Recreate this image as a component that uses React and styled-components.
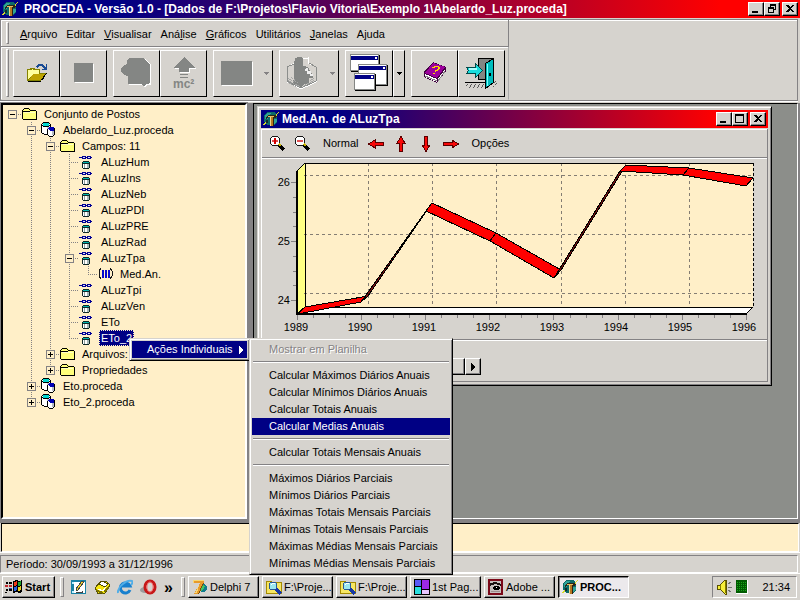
import React from "react";
import styled, { createGlobalStyle, css } from "styled-components";

const face = "#d6d3ce";
const shade = "#848284";
const cream = "#ffefc8";
const navy = "#000084";

const GlobalStyle = createGlobalStyle`
  * { box-sizing: border-box; }
  html, body { margin: 0; }
  body {
    background: ${face};
    color: #000;
    font: 11px/13px "Liberation Sans", Arial, sans-serif;
    overflow: hidden;
  }
  button { font: inherit; color: inherit; padding: 0; margin: 0; }
  ul { list-style: none; margin: 0; padding: 0; }
  svg { display: block; flex: none; }
`;

const raised = css`
  border: 1px solid;
  border-color: #fff #000 #000 #fff;
  box-shadow: inset -1px -1px 0 ${shade};
`;
const sunken = css`
  border: 1px solid;
  border-color: ${shade} #fff #fff ${shade};
`;

const Screen = styled.div`
  position: relative;
  display: flex;
  flex-direction: column;
  min-height: 100vh;
  background: ${face};
`;

const TitleBar = styled.header`
  display: flex;
  align-items: center;
  height: 18px;
  padding: 0 2px;
  gap: 3px;
  color: #fff;
  background: linear-gradient(90deg, ${navy} 0%, ${navy} 15%, #ff0000 90%);
`;
const Title = styled.h1`
  flex: 1;
  min-width: 0;
  margin: 0;
  padding-left: ${(p) => p.$inset || 0}px;
  font-size: 12px;
  line-height: 16px;
  white-space: nowrap;
  overflow: hidden;
`;
const Captions = styled.div`
  display: flex;
`;
const CaptionButton = styled.button`
  ${raised}
  display: grid;
  place-items: center;
  width: 16px;
  height: 14px;
  background: ${face};
  margin-left: ${(p) => (p.$apart ? 2 : 0)}px;
`;

const CoolBar = styled.div`
  margin: 1px 2px 2px 0;
  border: 1px solid ${shade};
  box-shadow: inset 1px 1px 0 #fff, 0 1px 0 #fff;
`;
const Band = styled.div`
  display: flex;
  align-items: center;
  width: max-content;
  min-width: 508px;
  height: ${(p) => p.$height}px;
  padding-left: 5px;
  border-right: 1px solid ${(p) => (p.$last ? "#aaa" : shade)};
  border-bottom: 1px solid ${(p) => (p.$last ? face : shade)};
  box-shadow: inset 1px 1px 0 #fff;
`;
const Grip = styled.i`
  align-self: stretch;
  width: 3px;
  margin: 2px ${(p) => p.$after}px 2px 0;
  border: 1px solid;
  border-color: #fff ${shade} ${shade} #fff;
`;
const MenuBar = styled.nav`
  display: flex;
  gap: 9px;
  padding: 2px 0 0 11px;
`;
const MenuButton = styled.button`
  border: 0;
  background: none;
  line-height: 14px;
`;
const ToolStrip = styled.div`
  display: flex;
  gap: 6px;
  padding-right: 2px;
`;
const ToolGroup = styled.div`
  display: flex;
`;
const ToolButton = styled.button`
  ${raised}
  box-shadow: none;
  display: grid;
  place-items: center;
  width: ${(p) => p.$width || 47}px;
  height: 47px;
  background: ${face};
`;
const SplitFace = styled.span`
  display: flex;
  align-items: center;
  justify-content: space-between;
  width: 100%;
  padding: 0 3px 0 6px;
`;

const Work = styled.main`
  display: flex;
  flex: 1;
  background: ${shade};
`;
const TreePanel = styled.aside`
  width: 246px;
  margin: 0 6px 4px 1px;
  padding: 1px 0;
  background: ${cream};
  border: 2px solid;
  border-color: #000 #fff #fff #000;
  outline: 1px solid ${shade};
`;
const TreeRow = styled.li`
  display: flex;
  align-items: center;
  height: 16px;
`;
const NodeIcon = styled.span`
  display: grid;
  place-items: center start;
  width: 20px;
  height: 16px;
`;
const NodeLabel = styled.span`
  padding: 1px 2px;
  line-height: 14px;
  white-space: nowrap;
  ${(p) => p.$selected && css`
    color: #fff;
    background: ${navy};
    outline: 1px dotted ${cream};
    outline-offset: -1px;
  `}
`;
const Toggle = styled.button`
  display: block;
  border: 0;
  background: none;
`;

const Desktop = styled.section`
  position: relative;
  flex: 1;
  margin: 0 2px 4px 0;
  background: #8c8e8a;
  border: 1px solid;
  border-color: #000 #fff #fff #000;
`;
const ChildWindow = styled.article`
  position: absolute;
  left: 3px;
  top: 2px;
  width: 515px;
  background: ${face};
  ${raised}
  border-color: ${face} #000 #000 ${face};
  box-shadow: inset 1px 1px 0 #fff, inset -1px -1px 0 ${shade};
  padding: 3px;
`;
const ChildBody = styled.div`
  margin-top: 1px;
  border-right: 1px solid ${shade};
  border-left: 1px solid #fff;
`;
const ChartTools = styled.div`
  display: flex;
  align-items: center;
  height: 29px;
  padding-left: 3px;
  border-top: 1px solid #fff;
  border-bottom: 1px solid ${shade};
`;
const FlatButton = styled.button`
  display: grid;
  place-items: center;
  min-width: 25px;
  height: 22px;
  border: 0;
  background: none;
`;
const WideFlat = styled(FlatButton)`
  padding: 0 5px 0 8px;
  min-width: 44px;
`;
const ChartHolder = styled.div`
  box-shadow: inset 0 1px 0 #fff;
  svg { width: 100%; height: auto; }
`;
const ScrollPanel = styled.div`
  height: 43px;
  padding: 18px 0 0 31px;
  border-top: 1px solid ${shade};
  border-bottom: 1px solid ${shade};
  box-shadow: inset 0 1px 0 #fff;
`;
const ScrollBar = styled.div`
  display: flex;
  width: 188px;
`;
const ScrollButton = styled.button`
  ${raised}
  display: grid;
  place-items: center;
  width: 16px;
  height: 17px;
  background: ${face};
`;
const Thumb = styled.div`
  ${raised}
  flex: 1;
`;

const Memo = styled.textarea`
  display: block;
  width: calc(100% - 2px);
  height: 29px;
  margin: 0 1px;
  resize: none;
  background: ${cream};
  border: 1px solid;
  border-color: #000 #fff #fff #000;
  border-radius: 0;
  outline: 0;
`;
const MemoFrame = styled.div`
  border-bottom: 1px solid #fff;
`;
const StatusBar = styled.footer`
  ${sunken}
  height: 18px;
  margin: 2px 2px 0 0;
  padding: 1px 5px;
  line-height: 14px;
`;

const TaskBar = styled.footer`
  display: flex;
  align-items: center;
  height: 27px;
  padding: 0 3px 0 2px;
  border-top: 1px solid #fff;
`;
const StartButton = styled.button`
  ${raised}
  display: flex;
  align-items: center;
  gap: 2px;
  width: 53px;
  height: 22px;
  padding-left: 2px;
  font-weight: bold;
  background: ${face};
`;
const Divider = styled.i`
  width: 4px;
  height: 20px;
  margin: 0 ${(p) => p.$after}px 0 5px;
  border: 1px solid;
  border-color: #fff ${shade} ${shade} #fff;
`;
const QuickLaunch = styled.div`
  display: flex;
  align-items: center;
  gap: 7px;
  width: 105px;
`;
const QuickButton = styled.button`
  border: 0;
  background: none;
  font-weight: bold;
  font-size: 16px;
`;
const Tasks = styled.div`
  display: flex;
  flex: 1;
  gap: 3px;
`;
const TaskButton = styled.button`
  ${raised}
  display: flex;
  align-items: center;
  gap: 2px;
  width: 71px;
  height: 22px;
  padding-left: 3px;
  white-space: nowrap;
  overflow: hidden;
  background: ${face};
  ${(p) => p.$active && css`
    font-weight: bold;
    background: #ece9ec;
    border-color: #000 #fff #fff #000;
    box-shadow: inset 1px 1px 0 ${shade};
  `}
`;
const Tray = styled.div`
  ${sunken}
  display: flex;
  align-items: center;
  gap: 3px;
  width: 85px;
  height: 22px;
  padding: 0 6px 0 3px;
`;
const Clock = styled.time`
  margin-left: auto;
`;

const Popup = styled.ul`
  ${raised}
  position: absolute;
  border-color: ${face} #000 #000 ${face};
  box-shadow: inset 1px 1px 0 #fff, inset -1px -1px 0 ${shade};
  padding: 2px;
  background: ${face};
`;
const ParentPopup = styled(Popup)`
  left: 129px;
  top: 338px;
  width: 121px;
`;
const SubPopup = styled(Popup)`
  left: 249px;
  top: 338px;
  width: 204px;
`;
const PopupItem = styled.button`
  display: flex;
  align-items: center;
  justify-content: space-between;
  width: 100%;
  height: 17px;
  padding: 0 3px 0 ${(p) => p.$inset || 17}px;
  border: 0;
  background: ${(p) => (p.$hot ? navy : "transparent")};
  color: ${(p) => (p.$hot ? "#fff" : "#000")};
  white-space: nowrap;
  &:disabled {
    color: ${shade};
    text-shadow: 1px 1px 0 #fff;
  }
`;
const PopupRule = styled.li`
  height: 2px;
  margin: 3px 1px 4px;
  border-top: 1px solid ${shade};
  border-bottom: 1px solid #fff;
`;

/* ---------- icons ---------- */

const Icon = ({ w = 16, h = 16, children }) => (
  <svg width={w} height={h} viewBox={`0 0 ${w} ${h}`} shapeRendering="crispEdges" aria-hidden="true">
    {children}
  </svg>
);

const AppIcon = () => (
  <Icon>
    <path d="M4 1h7l3 3v7l-3 3H4l-3-3V4z" fill="#0b6a68" />
    <path d="M4 2h4L5 5v3H2V4zM11 8h3v3l-3 2z" fill="#2fa398" />
    <path d="M0 14l3-4 2-1v1l-3 4zM12 5l3-4h1l-3 5z" fill="#d8dc28" />
    <path d="M2 7l4-3h6l2 1-1 2h-3V6H6L3 8z" fill="#2c2418" />
    <path d="M5 5h6v1H5z" fill="#e8c060" />
    <path d="M7 6h3v9H7z" fill="#b87820" />
    <path d="M7 6h1v9H7z" fill="#f0d890" />
    <path d="M10 7h1v8h-1z" fill="#302010" />
    <path d="M3 9h2v3H3z" fill="#102c2c" />
  </Icon>
);

const glyphs = {
  min: <path d="M1 7h6v2H1z" />,
  restore: <path fillRule="evenodd" d="M3 0h6v6H7V5h1V2H4v1H3zM1 3h6v6H1zm1 2v3h4V5z" />,
  max: <path fillRule="evenodd" d="M0 0h9v9H0zm1 2v6h7V2z" />,
  close: <path d="M1 1h2l2 2 2-2h2L6 4.500 9 8H7L5 6 3 8H1l3-3.500z" />,
};
const CaptionSet = ({ middle }) => (
  <Captions>
    {["min", middle, "close"].map((name) => (
      <CaptionButton key={name} $apart={name === "close"} aria-label={name}>
        <Icon w={10} h={10}>{glyphs[name]}</Icon>
      </CaptionButton>
    ))}
  </Captions>
);

const DownArrow = ({ fill = "#848284" }) => (
  <Icon w={5} h={3}><path d="M0 0h5L3 3H2z" fill={fill} /></Icon>
);
const RightArrow = ({ fill = "#000" }) => (
  <Icon w={5} h={8}><path d="M0 0l4 4-4 4z" fill={fill} /></Icon>
);

const OpenIcon = () => (
  <Icon w={22} h={20}>
    <path d="M1 6h2l1-1h4l1 1h5v4h6l-5 8H1z" fill="#848200" />
    <path d="M2 7h3l1-1 2 1h5v4H7l-5 6z" fill="#ffff9c" />
    <path d="M7 11h12l-4 6H3z" fill="#bda200" />
    <path d="M2 18h13v1H2zM15 17l5-7h1l-5 8z" fill="#000" />
    <path d="M10 4l2-3h4l3 3h1V1h1v6h-5V6h2l-3-3h-2l-2 2z" fill="#184a94" />
  </Icon>
);
const SquareIcon = () => (
  <Icon w={22} h={22}>
    <path d="M2 2h19v19H2z" fill="#fff" />
    <rect x="1" y="1" width="19" height="19" rx="1" fill="#848684" />
  </Icon>
);
const BlobIcon = () => (
  <Icon w={32} h={32}>
    <path d="M7 2h17l6 6v20h-4l-2 3-3-3H8v-8l-4-2v-9l3-2z" fill="#fff" />
    <path d="M8 1h14l7 7v17l-1 2h-3l-2 3-3-3H7v-8l-4-1-3-3v-4l3-3 3-1V3z" fill="#848684" />
  </Icon>
);
const McText = styled.text`
  font: bold 12px "Liberation Sans", Arial, sans-serif;
`;
const EnergyIcon = () => (
  <Icon w={26} h={34}>
    <path d="M14 2l11 11h-6v4H9v-4H3z" fill="#fff" />
    <path d="M13 1l11 11h-6v4H8v-4H2z" fill="#848684" />
    <path d="M9 18h8v1H9zM9 21h8v1H9z" fill="#848684" />
    <McText x="2" y="32" fill="#848684">mc²</McText>
  </Icon>
);
const PanelIcon = () => (
  <Icon w={33} h={26}>
    <path d="M2 2h31v24H2z" fill="#fff" />
    <rect x="1" y="1" width="31" height="24" rx="1" fill="#848684" />
  </Icon>
);
const CubeIcon = () => (
  <Icon w={32} h={34}>
    <path d="M1 11l8-4M9 7V2M17 3l5-1v5l8 4v15l-15 7-14-7V11" fill="none" stroke="#fff" />
    <path d="M1 11l7-3M1 11v14l14 7 15-7V11l-7-4" fill="none" stroke="#8c8e8c" />
    <path d="M9 2l3-1h4l1 2v7l5 1 3 6 2 2v3h-4v6h-5l-3 4-4-3H6l2-7V9z" fill="#848684" />
    <path d="M20 12h2v3h3v3h2v2h-3v-2h-3v-3h-2z" fill="#eee" />
    <path d="M2 22l12 9M2 24l9 6M2 26l8 5M5 21l9 8M28 22l-10 8M28 24l-8 6" stroke="#a5a6a5" strokeDasharray="1 1" />
  </Icon>
);
const MiniWindow = ({ x, y, w, h }) => (
  <g>
    <rect x={x + 1} y={y + 1} width={w} height={h} fill="#000" />
    <rect x={x} y={y} width={w} height={h} fill="#848684" />
    <rect x={x + 1} y={y + 1} width={w - 2} height={h - 2} fill="#fff" />
    <rect x={x + 1} y={y + 2} width={w - 2} height="4" fill={navy} />
    <rect x={x + w - 4} y={y + 3} width="2" height="2" fill="#fff" />
  </g>
);
const WindowsIcon = () => (
  <Icon w={41} h={38}>
    <MiniWindow x={1} y={0} w={29} h={17} />
    <MiniWindow x={9} y={10} w={29} h={21} />
    <MiniWindow x={5} y={19} w={21} h={17} />
  </Icon>
);
const BookIcon = () => (
  <Icon w={24} h={24}>
    <path d="M10 1l13 5v4L14 22 1 16v-5z" fill="#420042" />
    <path d="M10 2l12 4-8 11-12-5z" fill="#9c009c" />
    <path d="M2 13l12 5v3L2 16zM15 18l7-10v2l-7 10z" fill="#fff" />
    <path d="M2 15l12 5M15 20l7-10" stroke="#848284" />
    <path d="M9 6.500h2l1-1h3l1 1v1l-2 2h-2v1" fill="none" stroke="#ffd700" />
    <path d="M10 12h2v1h-2z" fill="#ffd700" />
  </Icon>
);
const ExitIcon = () => (
  <Icon w={33} h={34}>
    <path d="M13.500 2.500h15v21h-15z" fill="#848684" stroke="#000" />
    <path d="M20.500 7.500l8-5v24l-8 6z" fill="#00bdbd" stroke="#000" />
    <path d="M22.500 8v22" stroke="#7bffff" />
    <path d="M24 17h2v3h-2z" fill="#000" />
    <path d="M1.500 11.500h9v-4l7 7-7 7v-4h-9l2-3z" fill="#18dede" stroke="#004a4a" />
    <path d="M4 12h8v2H4z" fill="#a5ffff" />
    <path d="M0 26h20v1H0z" />
    <path d="M3 28l-3 3M7 28l-4 5M11 28l-4 5M15 28l-4 5M19 28l-4 5M32 27l-4 4M31 25l-2 2" stroke="#5a5a5a" strokeDasharray="1 1" />
  </Icon>
);

const FolderIcon = () => (
  <Icon>
    <path d="M1 4h1l1-2h5l1 2h5v9H1z" fill="#ffff7b" />
    <path d="M1 3h1v1H1zM2 2h5v1H2zM7 3h1v1H7zM0 4h1v9H0zM8 4h6v1H8zM14 5h1v8h-1zM1 13h14v1H1zM1 5h7v1H1z" fill="#000" />
    <path d="M2 6h11v1H2z" fill="#ffffc6" />
  </Icon>
);
const StationIcon = () => (
  <Icon>
    <path d="M1 2h8v9l-2 1H3l-2-1z" fill="#fff" />
    <path d="M6 3h2v8H6z" fill="#c6cbce" />
    <path d="M2 1h6v3H2z" fill="#00d6ce" />
    <path d="M2 0h6v1H2zM1 1h1v1H1zM8 1h1v1H8zM0 2h1v9H0zM9 2h1v4H9zM1 11h2v1H1zM3 12h4v1H3zM2 4h6v1H2zM1 3h1v1H1zM8 3h1v1H8z" fill="#000" />
    <path d="M7 7h6v6l-1 1H8l-1-1z" fill="#fff" />
    <path d="M11 8h2v5h-2z" fill="#b5bac6" />
    <path d="M8 5h4l1 1v2l-1 1H9L7 7z" fill="#0000b5" />
    <path d="M6 7h1v6H6zM13 6h1v7h-1zM7 13h1v1H7zM8 14h4v1H8zM12 13h1v1h-1z" fill="#000" />
  </Icon>
);
const FieldIcon = () => (
  <Icon>
    <path d="M0 3h13v1H0zM3 2h4v3H3zM8 2h4v3H8z" fill="#000094" />
    <path d="M4 3h2v1H4zM9 3h2v1H9z" fill="#dedff7" />
    <path d="M4 7h6v7H4z" fill="#fff" />
    <path d="M8 9h2v5H8z" fill="#a5b6b5" />
    <path d="M4 8h6v1H4z" fill="#00b5ad" />
    <path d="M4 7h6v1H4zM3 8h1v6H3zM10 8h1v6h-1zM4 14h6v1H4zM4 9h6v1H4z" fill="#102828" />
    <path d="M5 10h1v4H5z" fill="#8c9e9c" />
  </Icon>
);
const SeriesIcon = () => (
  <Icon>
    <path d="M3 2L1 5v5l2 3M12 2l2 3v5l-2 3" fill="none" stroke="#181818" />
    <path d="M4 4h2v8H4zM7 4h2v8H7zM10 4h2v8h-2z" fill="#0808ce" />
  </Icon>
);

const ZoomIcon = ({ plus }) => (
  <Icon w={17} h={17}>
    <circle cx="6" cy="6" r="5" fill="#fff" stroke="#181818" />
    <path d="M3 5h6v2H3z" fill="#e05050" />
    {plus && <path d="M5 3h2v6H5z" fill="#d60000" />}
    <path d="M10 10l5 5" stroke="#000" strokeWidth="3" />
    <path d="M10 9l2 2" stroke="#c6b200" strokeWidth="2" />
  </Icon>
);
const arrowPaths = {
  left: "M0.500 8L7 4v2.500h8.500v3H7V12z",
  right: "M15.500 8L9 4v2.500H.5v3H9V12z",
  up: "M8 .5L12 7H9.500v8.500h-3V7H4z",
  down: "M8 15.500L12 9H9.500V.5h-3V9H4z",
};
const PanIcon = ({ dir }) => (
  <Icon><path d={arrowPaths[dir]} fill="#f70808" stroke="#5a0000" /></Icon>
);

const FlagIcon = () => (
  <Icon w={18}>
    <path d="M8 2l3-1 3 1 3-1v12l-3 1-3-1-3 1z" fill="#000" />
    <path d="M9 3l3-1v4l-3 1z" fill="#f03818" />
    <path d="M13 3l3-1v4l-3 1z" fill="#18a030" />
    <path d="M9 8l3-1v4l-3 1z" fill="#2860e0" />
    <path d="M13 8l3-1v4l-3 1z" fill="#f0d020" />
    <path d="M1 3h2v2H1zM4 3h3v2H4zM1 10h2v2H1zM4 10h3v2H4zM0 13h2v1H0z" fill="#000" />
    <path d="M0 6h3v2H0zM4 6h3v2H4z" fill="#c02830" />
    <path d="M4 9h3v1H4z" fill="#2848a0" />
  </Icon>
);
const DesktopIcon = () => (
  <Icon>
    <rect x="0" y="1" width="15" height="14" fill="#1882a5" />
    <rect x="3" y="3" width="11" height="11" fill="#fff" />
    <path d="M1 3h2v2H1zM1 12h2v2H1z" fill="#bdefff" />
    <path d="M5 10l6-8 2 1-6 8-2 1z" fill="#f7cf31" stroke="#424a42" />
    <path d="M5 13h6v-1" fill="none" stroke="#424242" />
  </Icon>
);
const MailIcon = () => (
  <Icon>
    <path d="M1 9l6-7h5l4 4-5 8-7 1z" fill="#f7e710" stroke="#5a5200" />
    <path d="M5 5l6 3 3-3-6-3z" fill="#fff" stroke="#524a00" />
    <path d="M2 10l7 3v2l-7-3zM10 12l5-6v3l-4 5z" fill="#7b7300" />
    <path d="M4 10l5 2 3-4" fill="none" stroke="#fff" />
  </Icon>
);
const BrowserIcon = () => (
  <svg width="16" height="16" viewBox="0 0 16 16" aria-hidden="true">
    <path d="M13 11a5 5 0 1 1 0-4H4" fill="none" stroke="#1880ce" strokeWidth="3" />
    <path d="M1 14C0 9 9 0 15 2c1 1 0 3-1 4" fill="none" stroke="#52aee7" strokeWidth="2" />
  </svg>
);
const OperaIcon = () => (
  <svg width="17" height="16" viewBox="0 0 17 16" aria-hidden="true">
    <ellipse cx="5" cy="11" rx="5" ry="3" fill="#9c9a9c" />
    <ellipse cx="10" cy="8" rx="5" ry="6" fill={face} stroke="#c61818" strokeWidth="3" />
    <ellipse cx="10" cy="8" rx="3" ry="5" fill="none" stroke="#f77b7b" />
  </svg>
);
const DelphiIcon = () => (
  <Icon>
    <circle cx="11" cy="9" r="4" fill="#107b8c" />
    <path d="M10 6l3 1-1 3-3 2z" fill="#42c663" />
    <path d="M1 1h11v3L7 15H2L8 4H1z" fill="#e79a29" />
    <path d="M1 1h11v1H2v2H1zM7 6L3 14h2z" fill="#f7d773" />
    <path d="M12 4L7 15H6l5-11z" fill="#7b4a08" />
  </Icon>
);
const ExplorerIcon = () => (
  <Icon>
    <path d="M0 2h5l1 1h9v11H0z" fill="#f7e763" stroke="#a58a00" />
    <circle cx="7" cy="7" r="4" fill="#9ce7ef" stroke="#295a94" />
    <path d="M10 10l5 5" stroke="#1839a5" strokeWidth="3" />
    <path d="M5 6l2-2h2" stroke="#fff" fill="none" />
  </Icon>
);
const PageIcon = () => (
  <Icon>
    <rect width="16" height="16" fill="#000" />
    <path d="M1 1h6v6H1z" fill="#5a5af7" />
    <path d="M8 1h7v9H8z" fill="#9c29e7" />
    <path d="M1 8h6v7H1z" fill="#29dede" />
    <path d="M8 11h7v4H8z" fill="#e7c6ff" />
  </Icon>
);
const EyeIcon = () => (
  <Icon>
    <rect width="15" height="16" fill="#7b0818" />
    <rect x="2" y="2" width="11" height="12" fill="#c6bebd" />
    <path d="M2 4l5-1 6 2v2l-5-2-4 1-2 1z" fill="#181010" />
    <path d="M4 9l3-2h3l3 2-3 2H6z" fill="#000" />
    <path d="M8 8h1v1H8z" fill="#fff" />
    <path d="M3 12h9v1H3z" fill="#9c8e8c" />
  </Icon>
);
const SpeakerIcon = () => (
  <Icon w={17}>
    <path d="M1 6h3l5-5h1v14H9l-5-5H1z" fill="#f7ef39" stroke="#5a5200" />
    <path d="M4 6v4M9 2v12" stroke="#847b00" />
    <path d="M12 5l3-2M12 8h4M12 11l3 2" stroke="#737573" />
  </Icon>
);
const MeterIcon = () => (
  <Icon w={12} h={14}>
    <path d="M0 0h12v14H0z" fill="#fff" />
    <path d="M0 0h11v13H0z" fill="#005a00" />
    <path d="M1 2h9M1 4h9M1 6h9M1 8h9M1 10h9" stroke="#18a518" strokeDasharray="1 1" />
  </Icon>
);

/* ---------- tree ---------- */

const Guide = ({ kind }) => {
  const [line, box] = kind;
  const up = "vtl".includes(line);
  const down = "vt".includes(line);
  const across = "tlh".includes(line);
  const drawing = (
    <Icon w={19} h={16}>
      <g fill="none" stroke="#848284" strokeDasharray="1 1">
        {up && <path d="M9.500 0v8" />}
        {down && <path d="M9.500 8v8" />}
        {across && <path d="M9 8.500h10" />}
      </g>
      {box && (
        <g>
          <rect x="5.500" y="4.500" width="8" height="8" fill={cream} stroke="#848284" />
          <path d={box === "+" ? "M7 8h5v1H7zM9 6h1v5H9z" : "M7 8h5v1H7z"} />
        </g>
      )}
    </Icon>
  );
  return box ? <Toggle aria-label={box === "+" ? "Expandir" : "Recolher"}>{drawing}</Toggle> : drawing;
};

const nodeIcons = { folder: <FolderIcon />, station: <StationIcon />, field: <FieldIcon />, series: <SeriesIcon /> };
const field = (label, guide = "t") => [[" ", "v", "v", guide], "field", label];
const nodes = [
  [["h-"], "folder", "Conjunto de Postos"],
  [[" ", "t-"], "station", "Abelardo_Luz.proceda"],
  [[" ", "v", "t-"], "folder", "Campos: 11"],
  ...["ALuzHum", "ALuzIns", "ALuzNeb", "ALuzPDI", "ALuzPRE", "ALuzRad"].map((n) => field(n)),
  field("ALuzTpa", "t-"),
  [[" ", "v", "v", "v", "l"], "series", "Med.An."],
  field("ALuzTpi"),
  field("ALuzVen"),
  field("ETo"),
  field("ETo_2", "l"),
  [[" ", "v", "t+"], "folder", "Arquivos: 3"],
  [[" ", "v", "l+"], "folder", "Propriedades"],
  [[" ", "t+"], "station", "Eto.proceda"],
  [[" ", "l+"], "station", "Eto_2.proceda"],
];

/* ---------- chart ---------- */

const AxisText = styled.text`
  font: 11px "Liberation Sans", Arial, sans-serif;
  text-anchor: ${(p) => p.$anchor || "middle"};
`;
const front = [[35, 157], [98, 145], [163, 54], [227, 84], [291, 121], [357, 14], [420, 18], [483, 29]];
const back = [[42, 150], [105, 139], [169, 46], [233, 76], [298, 113], [363, 8], [426, 11], [490, 21]];
const pts = (list) => list.map((p) => p.join(",")).join(" ");

const Chart = () => (
  <svg viewBox="-1 1 505 181" role="img" aria-label="Médias anuais de ALuzTpa, 1989 a 1996">
    <g shapeRendering="crispEdges">
      <rect x="42" y="6" width="448" height="144" fill={cream} />
      <path d="M34 14l8-8v144l-8 7z" fill="#ffff84" />
      <path d="M34 157l8-7h448l-7 7z" fill="#fff" stroke="#000" />
      <g stroke="#847d73" strokeDasharray="3 3" fill="none">
        {[106, 170, 234, 299, 363, 427].map((x) => <path key={x} d={`M${x - 0.5} 6v144`} />)}
        {[19, 78, 137].map((y) => <path key={y} d={`M41 ${y - 0.5}h449`} />)}
      </g>
      <path d="M34 14l8-8h448M42 6v144h448" fill="none" stroke="#000" />
      <path d="M490.500 6v144" stroke="#000" strokeDasharray="3 2" />
      <path d="M34 14v144M33 157h451" stroke="#000" strokeWidth="2" />
      {front.slice(1).map((p, i) => (
        <polygon
          key={i}
          points={pts([front[i], p, back[i + 1], back[i]])}
          fill={i === 1 || i === 4 ? "#7b1010" : "#ff0000"}
          stroke="#000"
        />
      ))}
      {Array.from({ length: 29 }, (_, i) => (
        <path key={i} d={`M${Math.round(34 + i * 16.03) + 0.5} 158v${i % 4 ? 3 : 5}`} stroke="#848284" />
      ))}
      {Array.from({ length: 9 }, (_, i) => (
        <path key={i} d={`M33 ${Math.round(143 - i * 14.75) + 0.5}h${i % 4 ? -3 : -5}`} stroke="#848284" />
      ))}
    </g>
    {[26, 25, 24].map((v, i) => <AxisText key={v} $anchor="end" x="27" y={29 + i * 59}>{v}</AxisText>)}
    {front.map((_, i) => <AxisText key={i} x={33 + i * 64} y="174">{1989 + i}</AxisText>)}
  </svg>
);

/* ---------- menus ---------- */

const menus = [["", "A", "rquivo"], ["Editar"], ["", "V", "isualisar"], ["Aná", "l", "ise"], ["", "G", "ráficos"], ["Utilitários"], ["", "J", "anelas"], ["A", "j", "uda"]];
const actions = [
  "Mostrar em Planilha", null,
  "Calcular Máximos Diários Anuais", "Calcular Mínimos Diários Anuais", "Calcular Totais Anuais", "Calcular Medias Anuais", null,
  "Calcular Totais Mensais Anuais", null,
  "Máximos Diários Parciais", "Mínimos Diários Parciais", "Máximas Totais Mensais Parciais",
  "Mínimas Totais Mensais Parciais", "Máximas Médias Mensais Parciais", "Mínimas Médias Mensais Parciais",
];
const tasks = [
  ["Delphi 7", <DelphiIcon />], ["F:\\Proje...", <ExplorerIcon />], ["F:\\Proje...", <ExplorerIcon />],
  ["1st Pag...", <PageIcon />], ["Adobe ...", <EyeIcon />], ["PROC...", <AppIcon />],
];

export default function App() {
  return (
    <Screen>
      <GlobalStyle />
      <TitleBar>
        <AppIcon />
        <Title $inset={3}>PROCEDA - Versão 1.0 - [Dados de F:\Projetos\Flavio Vitoria\Exemplo 1\Abelardo_Luz.proceda]</Title>
        <CaptionSet middle="restore" />
      </TitleBar>

      <CoolBar>
        <Band $height={27}>
          <Grip $after={0} />
          <MenuBar>
            {menus.map(([a, key, b]) => (
              <MenuButton key={a + key + b}>{a}{key && <u>{key}</u>}{b}</MenuButton>
            ))}
          </MenuBar>
        </Band>
        <Band $height={53} $last>
          <Grip $after={4} />
          <ToolStrip>
            <ToolGroup>
              <ToolButton aria-label="Abrir"><OpenIcon /></ToolButton>
              <ToolButton aria-label="Parar" disabled><SquareIcon /></ToolButton>
            </ToolGroup>
            <ToolGroup>
              <ToolButton aria-label="Mapa" disabled><BlobIcon /></ToolButton>
              <ToolButton aria-label="Calcular" disabled><EnergyIcon /></ToolButton>
            </ToolGroup>
            <ToolButton $width={60} aria-label="Planilha" disabled><SplitFace><PanelIcon /><DownArrow /></SplitFace></ToolButton>
            <ToolButton $width={60} aria-label="Gráfico 3D" disabled><SplitFace><CubeIcon /><DownArrow /></SplitFace></ToolButton>
            <ToolGroup>
              <ToolButton $width={48} aria-label="Janelas"><WindowsIcon /></ToolButton>
              <ToolButton $width={12} aria-label="Mais janelas"><DownArrow fill="#000" /></ToolButton>
            </ToolGroup>
            <ToolGroup>
              <ToolButton aria-label="Ajuda"><BookIcon /></ToolButton>
              <ToolButton aria-label="Sair"><ExitIcon /></ToolButton>
            </ToolGroup>
          </ToolStrip>
        </Band>
      </CoolBar>

      <Work>
        <TreePanel>
          <ul>
            {nodes.map(([guides, icon, label]) => (
              <TreeRow key={label}>
                {guides.map((kind, i) => <Guide key={i} kind={kind} />)}
                <NodeIcon>{nodeIcons[icon]}</NodeIcon>
                <NodeLabel $selected={label === "ETo_2"}>{label}</NodeLabel>
              </TreeRow>
            ))}
          </ul>
        </TreePanel>
        <Desktop>
          <ChildWindow>
            <TitleBar>
              <AppIcon />
              <Title as="h2">Med.An. de ALuzTpa</Title>
              <CaptionSet middle="max" />
            </TitleBar>
            <ChildBody>
              <ChartTools>
                <FlatButton aria-label="Ampliar"><ZoomIcon plus /></FlatButton>
                <FlatButton aria-label="Reduzir"><ZoomIcon /></FlatButton>
                <WideFlat>Normal</WideFlat>
                {["left", "up", "down", "right"].map((d) => (
                  <FlatButton key={d} aria-label={d}><PanIcon dir={d} /></FlatButton>
                ))}
                <WideFlat>Opções</WideFlat>
              </ChartTools>
              <ChartHolder><Chart /></ChartHolder>
              <ScrollPanel>
                <ScrollBar>
                  <Thumb />
                  <ScrollButton aria-label="Avançar"><RightArrow /></ScrollButton>
                </ScrollBar>
              </ScrollPanel>
            </ChildBody>
          </ChildWindow>
        </Desktop>
      </Work>

      <MemoFrame><Memo aria-label="Mensagens" readOnly /></MemoFrame>
      <StatusBar>Período: 30/09/1993 a 31/12/1996</StatusBar>

      <TaskBar>
        <StartButton><FlagIcon />Start</StartButton>
        <Divider $after={7} />
        <QuickLaunch>
          <QuickButton aria-label="Área de trabalho"><DesktopIcon /></QuickButton>
          <QuickButton aria-label="Correio"><MailIcon /></QuickButton>
          <QuickButton aria-label="Navegador"><BrowserIcon /></QuickButton>
          <QuickButton aria-label="Opera"><OperaIcon /></QuickButton>
          <QuickButton>»</QuickButton>
        </QuickLaunch>
        <Divider $after={3} />
        <Tasks>
          {tasks.map(([label, icon], i) => (
            <TaskButton key={i} $active={i === 5}>{icon}{label}</TaskButton>
          ))}
        </Tasks>
        <Tray>
          <SpeakerIcon />
          <MeterIcon />
          <Clock>21:34</Clock>
        </Tray>
      </TaskBar>

      <ParentPopup>
        <li><PopupItem $hot $inset={15}>Ações Individuais<RightArrow fill="#fff" /></PopupItem></li>
      </ParentPopup>
      <SubPopup>
        {actions.map((label, i) => label === null
          ? <PopupRule key={i} />
          : <li key={i}><PopupItem $hot={label === "Calcular Medias Anuais"} disabled={i === 0}>{label}</PopupItem></li>)}
      </SubPopup>
    </Screen>
  );
}
